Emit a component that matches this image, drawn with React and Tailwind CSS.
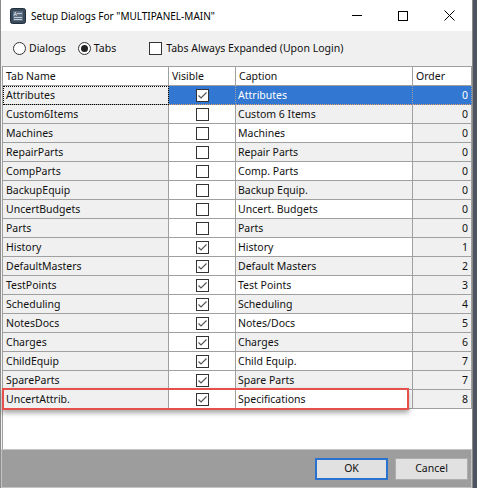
import React from "react"

const rows = [
  { name: "Attributes", visible: true, caption: "Attributes", order: 0 },
  { name: "Custom6Items", visible: false, caption: "Custom 6 Items", order: 0 },
  { name: "Machines", visible: false, caption: "Machines", order: 0 },
  { name: "RepairParts", visible: false, caption: "Repair Parts", order: 0 },
  { name: "CompParts", visible: false, caption: "Comp. Parts", order: 0 },
  { name: "BackupEquip", visible: false, caption: "Backup Equip.", order: 0 },
  { name: "UncertBudgets", visible: false, caption: "Uncert. Budgets", order: 0 },
  { name: "Parts", visible: false, caption: "Parts", order: 0 },
  { name: "History", visible: true, caption: "History", order: 1 },
  { name: "DefaultMasters", visible: true, caption: "Default Masters", order: 2 },
  { name: "TestPoints", visible: true, caption: "Test Points", order: 3 },
  { name: "Scheduling", visible: true, caption: "Scheduling", order: 4 },
  { name: "NotesDocs", visible: true, caption: "Notes/Docs", order: 5 },
  { name: "Charges", visible: true, caption: "Charges", order: 6 },
  { name: "ChildEquip", visible: true, caption: "Child Equip.", order: 7 },
  { name: "SpareParts", visible: true, caption: "Spare Parts", order: 7 },
  { name: "UncertAttrib.", visible: true, caption: "Specifications", order: 8 },
]

const Check = ({ checked }) => (
  <span className="w-[13px] h-[13px] border border-[#333] bg-white flex items-center justify-center">
    {checked && (
      <svg width="11" height="11" viewBox="0 0 11 11">
        <path d="M1.5 5.5 L4 8 L9.5 2.5" fill="none" stroke="#555" strokeWidth="1.2" />
      </svg>
    )}
  </span>
)

const Radio = ({ on }) => (
  <span className="w-[13px] h-[13px] rounded-full border border-[#333] bg-white flex items-center justify-center">
    {on && <span className="w-[7px] h-[7px] rounded-full bg-[#222]" />}
  </span>
)

export default function App() {
  return (
    <div className="w-[477px] h-[488px] flex bg-[#4d5560] font-['Noto_Sans',sans-serif] text-[10.5px] text-[#111] leading-none overflow-hidden">
      <div className="w-[473px] h-full flex flex-col bg-[#f0f0f0] border-x border-[#8c8c8c]">
        {/* title bar */}
        <div className="h-[31px] bg-white flex items-center shrink-0">
          <svg className="ml-[9px]" width="16" height="16" viewBox="0 0 16 16">
            <rect x="0.5" y="0.5" width="15" height="15" rx="2" fill="#3a4a5a" stroke="#22303d" />
            <rect x="3" y="3" width="10" height="10" fill="#5b6d80" />
            <text x="3.5" y="8" fontSize="5" fill="#fff" fontFamily="Liberation Sans">A</text>
            <path d="M7 5.5h5M4 9.5h8M4 11.5h8" stroke="#dfe6ee" strokeWidth="0.8" />
          </svg>
          <span className="ml-[5px] text-[10px] text-black">Setup Dialogs For "MULTIPANEL-MAIN"</span>
          <div className="ml-auto flex items-center">
            <div className="w-[46px] h-[31px] flex items-center justify-center">
              <span className="w-[10px] h-px bg-black" />
            </div>
            <div className="w-[46px] h-[31px] flex items-center justify-center">
              <span className="w-[10px] h-[10px] border border-black" />
            </div>
            <div className="w-[46px] h-[31px] flex items-center justify-center">
              <svg width="11" height="11" viewBox="0 0 11 11">
                <path d="M0.5 0.5 L10.5 10.5 M10.5 0.5 L0.5 10.5" stroke="#000" strokeWidth="1" />
              </svg>
            </div>
          </div>
        </div>

        {/* options */}
        <div className="h-[35px] flex items-center shrink-0 pl-[12px]">
          <Radio />
          <span className="ml-[3px]">Dialogs</span>
          <span className="ml-[12px]"><Radio on /></span>
          <span className="ml-[3px]">Tabs</span>
          <span className="ml-[33px]"><Check /></span>
          <span className="ml-[4px]">Tabs Always Expanded (Upon Login)</span>
        </div>

        {/* grid */}
        <div className="flex-1 bg-white border-l border-t border-[#a0a0a0] ml-px">
          <div className="grid grid-cols-[166px_67px_177px_59px] h-[19px]">
            <div className="border-r border-b border-[#a0a0a0] pl-[3px] flex items-center">Tab Name</div>
            <div className="border-r border-b border-[#a0a0a0] pl-[3px] flex items-center">Visible</div>
            <div className="border-r border-b border-[#a0a0a0] pl-[3px] flex items-center">Caption</div>
            <div className="border-r border-b border-[#a0a0a0] pl-[3px] flex items-center">Order</div>
          </div>
          {rows.map((r, i) => {
            const sel = i === 0
            const alt = i % 2 === 1
            return (
              <div key={r.name} className="relative grid grid-cols-[166px_67px_177px_59px] h-[19px]">
                <div
                  className={
                    "border-r border-b border-[#a0a0a0] pl-[3px] flex items-center bg-[#f0f0f0] " +
                    (sel ? "outline-1 outline-dotted outline-black -outline-offset-1" : "")
                  }
                >
                  {r.name}
                </div>
                <div
                  className={
                    "border-r border-b border-[#a0a0a0] flex items-center justify-center " +
                    (sel ? "bg-[#3277d2] border-b-[#e8a060] border-dotted" : "bg-white")
                  }
                >
                  <Check checked={r.visible} />
                </div>
                <div
                  className={
                    "border-r border-b border-[#a0a0a0] pl-[2px] flex items-center " +
                    (sel ? "bg-[#3277d2] text-white border-b-[#e8a060] border-dotted" : alt ? "bg-[#f0f0f0]" : "bg-white")
                  }
                >
                  {r.caption}
                </div>
                <div
                  className={
                    "border-r border-b border-[#a0a0a0] pr-[3px] flex items-center justify-end " +
                    (sel ? "bg-[#3277d2] text-white border-b-[#e8a060] border-dotted" : "bg-[#f0f0f0]")
                  }
                >
                  {r.order}
                </div>
                {r.name === "UncertAttrib." && (
                  <div className="absolute left-[-1px] top-[-2px] w-[407px] h-[22px] border-2 border-[#e5504d] shadow-[0_3px_5px_rgba(0,0,0,0.35)] pointer-events-none" />
                )}
              </div>
            )
          })}
        </div>

        {/* footer */}
        <div className="h-[39px] shrink-0 bg-[#9d9d9d] border border-[#c4c4c4] flex items-center justify-end gap-[7px] pr-[3px]">
          <button className="w-[73px] h-[22px] bg-[#e1e1e1] border-2 border-[#2a72d0] flex items-center justify-center">OK</button>
          <button className="w-[73px] h-[22px] bg-[#e1e1e1] border border-[#adadad] flex items-center justify-center">Cancel</button>
        </div>
      </div>
    </div>
  )
}
